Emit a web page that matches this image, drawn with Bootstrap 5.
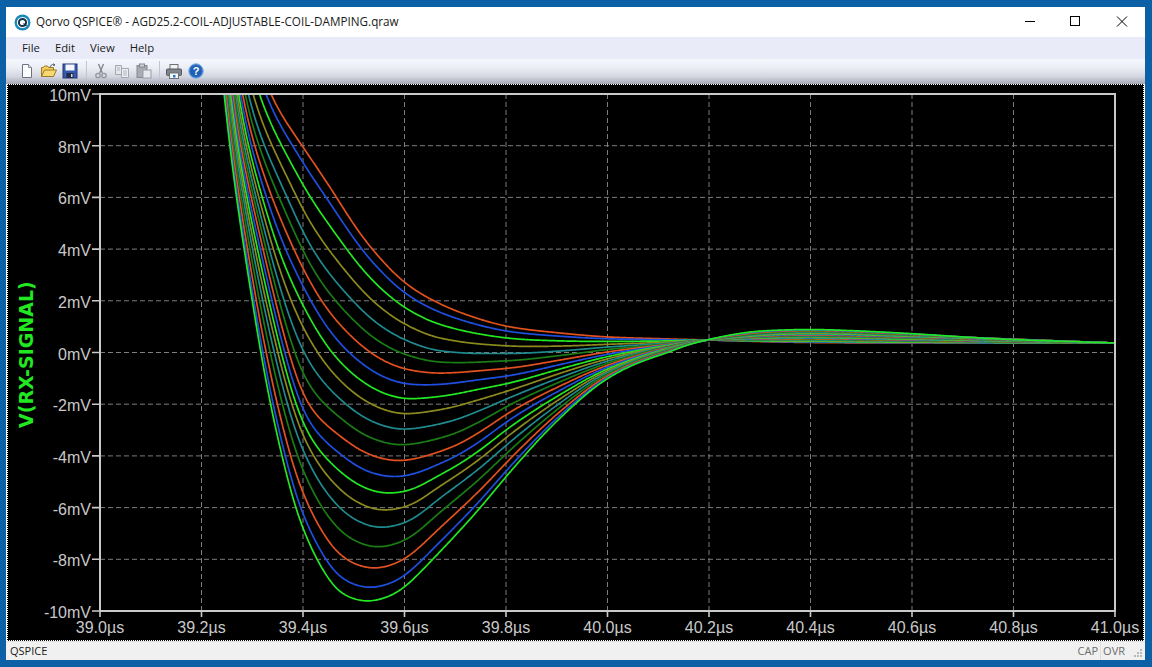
<!DOCTYPE html>
<html lang="en">
<head>
<meta charset="utf-8">
<title>Qorvo QSPICE</title>
<link href="https://cdn.jsdelivr.net/npm/bootstrap@5.3.0/dist/css/bootstrap.min.css" rel="stylesheet">
<style>
html,body{height:100%;overflow:hidden}
body{background:#0b60a6;padding:7px 7px 7px 6px;font-family:"Open Sans","Noto Sans",sans-serif;font-size:12px;color:#1a1a1a}
.win{background:#fff;height:653px}
.titlebar{height:30px;background:#fff;padding-left:8px;gap:5px;font-size:11.7px;white-space:nowrap}
.wctl{width:46px;height:30px}
.menu{height:22px;background:#e9ecf8;padding-left:8.5px}
.menu .nav-link{color:#1a1a1a;font-size:11.3px;padding:0 7.5px;line-height:22px}
.toolbar{height:25px;padding:0 0 2px 13px;gap:5.5px;background:linear-gradient(#f6f8fe 0,#eceef6 35%,#d4d6e0 70%,#a6a8b6 100%)}
.tb{width:16px;height:16px;display:block}
.sep{width:1px;height:20px;background:#c2c4cf;margin:0 .5px 0 2px}
.plot{flex:1 1 0;background:#000;border:1px dotted #fff;margin:0 1px;min-height:0;overflow:hidden}
.plot svg{display:block}
.status{height:19px;background:#f0f0f0;border-top:1px solid #e2e2e2;font-size:11px;padding-left:4px}
.status .cell{color:#6d6d6d;padding:0 2px;border-left:1px solid #dcdcdc;line-height:18px}
.grip{width:18px;height:18px}
.lab{fill:#c9c9c9;font:16px "Liberation Sans",Arial,sans-serif}
.ylab{fill:#22e822;font:bold 19px "DejaVu Sans",Verdana,sans-serif}
</style>
</head>
<body>
<div class="win d-flex flex-column">
  <div class="titlebar d-flex align-items-center">
    <svg width="17" height="17" viewBox="0 0 17 17"><circle cx="8.5" cy="8.5" r="8" fill="#1788b8"/><circle cx="8.5" cy="8.5" r="5.6" fill="#fff"/><circle cx="8.5" cy="8.5" r="3.6" fill="none" stroke="#14324a" stroke-width="2"/><path d="M9.5 9.5l3 2.5" stroke="#14324a" stroke-width="1.6"/></svg>
    <span class="flex-grow-1">Qorvo QSPICE® - AGD25.2-COIL-ADJUSTABLE-COIL-DAMPING.qraw</span>
    <div class="d-flex">
      <svg class="wctl" viewBox="0 0 46 30"><path d="M18 14.500h10" stroke="#000" stroke-width="1"/></svg>
      <svg class="wctl" viewBox="0 0 46 30"><rect x="17.500" y="9.500" width="9" height="9" fill="none" stroke="#000"/></svg>
      <svg class="wctl" viewBox="0 0 46 30"><path d="M18 9.500l10 10M28 9.500l-10 10" stroke="#000" stroke-width="1"/></svg>
    </div>
  </div>
  <ul class="nav menu">
    <li class="nav-item"><a class="nav-link" href="#">File</a></li>
    <li class="nav-item"><a class="nav-link" href="#">Edit</a></li>
    <li class="nav-item"><a class="nav-link" href="#">View</a></li>
    <li class="nav-item"><a class="nav-link" href="#">Help</a></li>
  </ul>
  <div class="toolbar d-flex align-items-center">
    <svg class="tb" viewBox="0 0 16 16"><path d="M3.500 1.500h6l3 3v10h-9z" fill="#fff" stroke="#6e7280"/><path d="M9.500 1.500v3h3" fill="#dfe2ea" stroke="#8a8e9a"/></svg>
    <svg class="tb" viewBox="0 0 16 16"><path d="M.5 13.500v-9h2l1-1.500h3l1 1.500h5v3" fill="#f6cf5c" stroke="#9a7a22"/><path d="M.5 13.500l3-6.500h12l-3 6.500z" fill="#f8d870" stroke="#9a7a22"/><path d="M9 4c1-2.500 3-3 5-2l-1.500-1.500M14 2l-2 .4" fill="none" stroke="#55606e" stroke-width="1"/></svg>
    <svg class="tb" viewBox="0 0 16 16"><rect x="1" y="1" width="14" height="14" fill="#3559ad" stroke="#22367a"/><rect x="3.500" y="1.500" width="9" height="6" fill="#f4f6fc"/><rect x="4.500" y="10" width="7" height="5" fill="#252a44"/><rect x="9" y="11" width="1.500" height="3" fill="#d8dcea"/></svg>
    <div class="sep"></div>
    <svg class="tb" viewBox="0 0 16 16"><path d="M5.500 1l3.800 9M10.500 1l-3.800 9" stroke="#85878f" stroke-width="1.400" fill="none"/><circle cx="5" cy="12.500" r="2.200" fill="none" stroke="#93959d" stroke-width="1.300"/><circle cx="11" cy="12.500" r="2.200" fill="none" stroke="#93959d" stroke-width="1.300"/></svg>
    <svg class="tb" viewBox="0 0 16 16"><path d="M1.500 2.500h6v9h-6z" fill="#e6e7ec" stroke="#a4a6b0"/><path d="M7.500 5.500h7v9h-7z" fill="#eeeff3" stroke="#a4a6b0"/><path d="M9 8h4M9 10h4M9 12h4M3 5h3M3 7h3" stroke="#b4b6c0"/></svg>
    <svg class="tb" viewBox="0 0 16 16"><rect x="1" y="2.500" width="10" height="12" fill="#a9abb4" stroke="#85878f"/><rect x="3.500" y="1" width="5" height="3" fill="#d0d1d8" stroke="#85878f"/><rect x="7" y="7" width="8" height="8" fill="#e8e9ee" stroke="#9a9ca6"/></svg>
    <div class="sep"></div>
    <svg class="tb" viewBox="0 0 16 16"><rect x="4" y="1.500" width="8" height="5" fill="#f3f3f3" stroke="#6c7078"/><rect x=".5" y="6" width="15" height="6.500" rx="1" fill="#7e838c" stroke="#54585f"/><rect x="3.500" y="10" width="9" height="5.500" fill="#f6f6f6" stroke="#6c7078"/><rect x="7" y="12" width="2.500" height="2.500" fill="#2a78c8"/></svg>
    <svg class="tb" viewBox="0 0 16 16"><circle cx="8" cy="8" r="7.300" fill="#2d72c4" stroke="#8fb6e6"/><circle cx="8" cy="8" r="5.600" fill="#1f5fb4"/><text x="8" y="12" text-anchor="middle" fill="#fff" font-family="Liberation Sans,sans-serif" font-weight="700" font-size="11">?</text></svg>
  </div>
  <main class="plot position-relative">
    <svg id="chart" width="1135" height="554" viewBox="8 85 1135 554">
      <defs><clipPath id="c"><rect x="100" y="94" width="1015" height="517"/></clipPath></defs>
      <path fill="none" stroke="#7c7c7c" stroke-width="1" stroke-dasharray="5 3" d="M201.500 94V611M303 94V611M404.500 94V611M506 94V611M607.500 94V611M709 94V611M810.500 94V611M912 94V611M1013.500 94V611M100 145.700H1115M100 197.400H1115M100 249.100H1115M100 300.800H1115M100 352.500H1115M100 404.200H1115M100 455.900H1115M100 507.600H1115M100 559.300H1115"/>
      <g id="curves" clip-path="url(#c)" fill="none" stroke-width="1.700"></g>
      <rect x="100" y="94" width="1015" height="517" fill="none" stroke="#c9c9c9" stroke-width="2"/>
      <path fill="none" stroke="#c9c9c9" stroke-width="1.600" d="M92 94h8M92 145.700h8M92 197.400h8M92 249.100h8M92 300.800h8M92 352.500h8M92 404.200h8M92 455.900h8M92 507.600h8M92 559.300h8M92 611h8M100 611v6M201.500 611v6M303 611v6M404.500 611v6M506 611v6M607.500 611v6M709 611v6M810.500 611v6M912 611v6M1013.500 611v6M1115 611v6"/>
      <g class="lab" text-anchor="end">
        <text x="91" y="101">10mV</text><text x="91" y="152.700">8mV</text><text x="91" y="204.400">6mV</text><text x="91" y="256.100">4mV</text><text x="91" y="307.800">2mV</text><text x="91" y="359.500">0mV</text><text x="91" y="411.200">-2mV</text><text x="91" y="462.900">-4mV</text><text x="91" y="514.600">-6mV</text><text x="91" y="566.300">-8mV</text><text x="91" y="618">-10mV</text>
      </g>
      <g class="lab" text-anchor="middle">
        <text x="100" y="633">39.0µs</text><text x="201.500" y="633">39.2µs</text><text x="303" y="633">39.4µs</text><text x="404.500" y="633">39.6µs</text><text x="506" y="633">39.8µs</text><text x="607.500" y="633">40.0µs</text><text x="709" y="633">40.2µs</text><text x="810.500" y="633">40.4µs</text><text x="912" y="633">40.6µs</text><text x="1013.500" y="633">40.8µs</text><text x="1115" y="633">41.0µs</text>
      </g>
      <text class="ylab" transform="translate(33 428) rotate(-90)">V(RX-SIGNAL)</text>
    </svg>
  </main>
  <footer class="status d-flex align-items-center">
    <span class="flex-grow-1">QSPICE</span>
    <span class="cell border-0">CAP</span>
    <span class="cell">OVR</span>
    <svg class="grip" viewBox="0 0 18 18"><path d="M13 8h2M10 11h2M13 11h2M7 14h2M10 14h2M13 14h2" stroke="#b9b9b9" stroke-width="2"/></svg>
  </footer>
</div>
<script src="https://cdn.jsdelivr.net/npm/bootstrap@5.3.0/dist/js/bootstrap.bundle.min.js"></script>
<script>
const tail=[[[707,340],[810,342.5],[900,343],[1115,343]],
[[707,340],[810,340],[900,341],[1115,343]],
[[707,340],[810,337.5],[900,339],[1115,343]],
[[707,340],[810,335],[900,337],[1115,343]],
[[707,340],[810,332],[900,335],[1115,343]],
[[707,340],[730,335],[760,331],[810,329.5],[860,331],[900,333],[1000,339],[1115,343]]];
const keys=[
[[205,-120],[230,-40],[270,94],[303,147],[330,187],[356,228],[372,249],[405,283],[432,300],[470,316],[510,327],[560,333],[608,337],[670,339]],
[[205,-190],[225,-40],[247,94],[287,197],[312,249],[352,300],[375,322],[405,340],[440,351],[480,353.5],[510,353.5],[560,351],[608,347],[670,343]],
[[205,-180],[222,-40],[237,94],[262,197],[278,249],[300,300],[332,353],[360,380],[385,394],[407,399],[440,396.5],[480,389],[510,383],[560,369],[608,356.5],[670,345]],
[[205,-170],[218,-40],[231,94],[251,197],[263,249],[275,300],[288.5,353],[306,402],[340,436],[370,455],[397,461],[450,448],[480,432],[510,412],[560,386],[608,365],[670,347]],
[[205,-170],[215,-40],[227,94],[243,197],[252,249],[262.5,300],[274,353],[287,404],[298,440],[332,500],[355,520],[380,528],[405,523],[440,498],[480,468],[510,442],[560,403],[608,372],[670,349]],
[[205,-100],[212,-40],[223,94],[236,197],[244,249],[252,300],[260.5,353],[270,404],[282,457],[295,508],[303,530],[317,560],[340,593],[367,601.7],[397,593],[405,587],[433,559],[480,508],[510,472],[560,418],[608,378],[640,362],[668,352.5],[690,344]]
].map((a,i)=>a.concat(tail[i]));
function pchip(p){
  const n=p.length,h=[],d=[],m=new Array(n);
  for(let i=0;i<n-1;i++){h[i]=p[i+1][0]-p[i][0];d[i]=(p[i+1][1]-p[i][1])/h[i];}
  m[0]=d[0];m[n-1]=d[n-2];
  for(let i=1;i<n-1;i++){
    if(d[i-1]*d[i]<=0){m[i]=0;continue;}
    const w1=2*h[i]+h[i-1],w2=h[i]+2*h[i-1];
    m[i]=(w1+w2)/(w1/d[i-1]+w2/d[i]);
  }
  return x=>{
    let i=0;while(i<n-2&&x>p[i+1][0])i++;
    const t=(x-p[i][0])/h[i],t2=t*t,t3=t2*t;
    return (2*t3-3*t2+1)*p[i][1]+(t3-2*t2+t)*h[i]*m[i]+(-2*t3+3*t2)*p[i+1][1]+(t3-t2)*h[i]*m[i+1];
  };
}
const X0=205,X1=1115,SIG=8,R=24,W=[];
for(let j=-R;j<=R;j++)W.push(Math.exp(-j*j/(2*SIG*SIG)));
const WS=W.reduce((a,b)=>a+b,0);
const samples=keys.map(pchip).map(f=>{
  const raw=[],out=[];
  for(let x=X0;x<=X1;x++)raw.push(f(x));
  const N=raw.length;
  for(let i=0;i<N;i++){
    let s=0;
    for(let j=-R;j<=R;j++){
      const q=i+j;
      /* odd reflection at the ends keeps the slope there */
      const v=q<0?2*raw[0]-raw[-q]:q>=N?2*raw[N-1]-raw[2*N-2-q]:raw[q];
      s+=W[j+R]*v;
    }
    out.push(s/WS);
  }
  return out;
});
function val(k,i){
  const u=k/4,n=Math.min(Math.floor(u),4),t=u-n;
  const P=j=>samples[Math.max(0,Math.min(5,j))][i];
  const a=P(n-1),b=P(n),c=P(n+1),d=P(n+2);
  return 0.5*((2*b)+(-a+c)*t+(2*a-5*b+4*c-d)*t*t+(-a+3*b-3*c+d)*t*t*t);
}
const cols=['#e2511f','#1f4fe0','#22e822','#8c8a1e','#1f8a8e','#1a7d14'];
const g=document.getElementById('curves');
for(let k=0;k<=20;k++){
  let d='';
  for(let x=X0;x<=X1;x++){d+=(d?'L':'M')+x+' '+val(k,x-X0).toFixed(2);}
  const e=document.createElementNS('http://www.w3.org/2000/svg','path');
  e.setAttribute('d',d);e.setAttribute('stroke',cols[k%6]);g.appendChild(e);
}
</script>
</body>
</html>
